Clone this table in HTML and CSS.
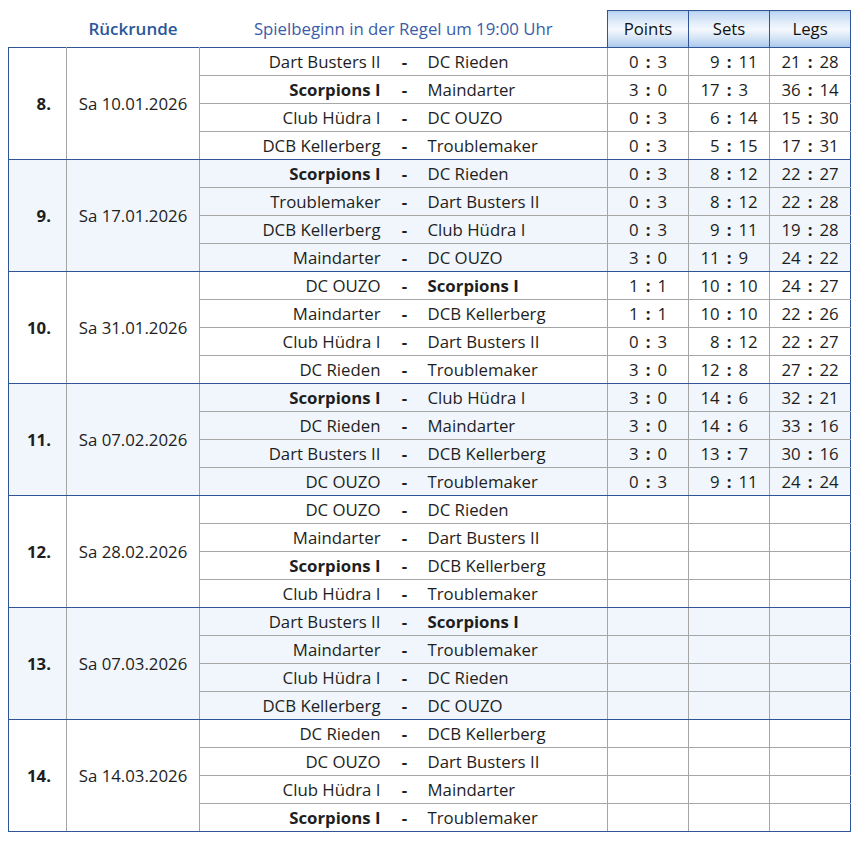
FILE: index.html
```html
<!DOCTYPE html>
<html lang="de">
<head>
<meta charset="utf-8">
<title>Rückrunde</title>
<link rel="stylesheet" href="styles.css">
</head>
<body>
<table class="plan">
  <colgroup>
    <col class="c-round"><col class="c-date"><col class="c-home"><col class="c-dash"><col class="c-away"><col class="c-score"><col class="c-score"><col class="c-score">
  </colgroup>
  <thead>
    <tr>
      <th class="blank"></th>
      <th class="title">Rückrunde</th>
      <th colspan="3" class="info">Spielbeginn in der Regel um 19:00 Uhr</th>
      <th class="sh">Points</th>
      <th class="sh">Sets</th>
      <th class="sh">Legs</th>
    </tr>
  </thead>
  <tbody id="body"></tbody>
</table>
<script src="app.js"></script>
</body>
</html>
```

FILE: styles.css
```css
html, body {
  margin: 0;
  padding: 0;
  background: #ffffff;
}
body {
  padding: 10px 0 0 8px;
  font-family: "Open Sans", "Noto Sans", sans-serif;
  font-size: 16.8px;
  color: #1e1e1e;
}
.plan {
  border-collapse: collapse;
  table-layout: fixed;
  width: 843px;
}
.c-round { width: 58px; }
.c-date { width: 133px; }
.c-home { width: 193px; }
.c-dash { width: 24px; }
.c-away { width: 191px; }
.c-score { width: 81px; }

.plan th {
  height: 36px;
  padding: 0;
  font-weight: normal;
  line-height: 20px;
}
.title {
  color: #2b579a;
  font-weight: 600 !important;
  font-size: 17px;
  text-align: center;
}
.info {
  color: #3b5ca8;
  text-align: center;
}
.sh {
  border: 1px solid #2f5597;
  background: linear-gradient(to bottom, #bdd5f1 0%, #e6f0fb 35%, #f4f8fd 50%, #d3e3f6 75%, #a9c8ec 100%);
  color: #111;
  text-align: center;
}
.plan td {
  height: 27px;
  padding: 0;
  border: 1px solid #a6a6a6;
  white-space: nowrap;
  line-height: 20px;
}
.plan tbody tr.first td {
  border-top: 1px solid #2f5597;
}
.plan tbody tr.last td {
  border-bottom: 1px solid #2f5597;
}
.plan td.round {
  border-left: 1px solid #2f5597;
  text-align: right;
  padding-right: 15px;
  font-weight: 700;
  border-bottom: 1px solid #2f5597;
}
.plan td.date {
  text-align: center;
  border-bottom: 1px solid #2f5597;
}
.plan td.home {
  text-align: right;
  padding-right: 12px;
  border-right: none;
}
.plan td.dash {
  text-align: center;
  font-weight: 700;
  border-left: none;
  border-right: none;
}
.plan td.away {
  text-align: left;
  padding-left: 11px;
  border-left: none;
}
.plan td.legs {
  border-right: 1px solid #2f5597;
}
.alt td {
  background: #f0f6fb;
}
.bold {
  font-weight: 700;
}
.score {
  display: grid;
  grid-template-columns: 1fr auto 1fr;
  column-gap: 7px;
  align-items: center;
}
.score .l { text-align: right; }
.score .c { font-weight: 700; }
.score .r { text-align: left; }
```

FILE: app.js
```js
const rounds = [
  ["8.", "Sa 10.01.2026", [
    ["Dart Busters II", "DC Rieden", "0:3", "9:11", "21:28"],
    ["*Scorpions I", "Maindarter", "3:0", "17:3", "36:14"],
    ["Club Hüdra I", "DC OUZO", "0:3", "6:14", "15:30"],
    ["DCB Kellerberg", "Troublemaker", "0:3", "5:15", "17:31"]]],
  ["9.", "Sa 17.01.2026", [
    ["*Scorpions I", "DC Rieden", "0:3", "8:12", "22:27"],
    ["Troublemaker", "Dart Busters II", "0:3", "8:12", "22:28"],
    ["DCB Kellerberg", "Club Hüdra I", "0:3", "9:11", "19:28"],
    ["Maindarter", "DC OUZO", "3:0", "11:9", "24:22"]]],
  ["10.", "Sa 31.01.2026", [
    ["DC OUZO", "*Scorpions I", "1:1", "10:10", "24:27"],
    ["Maindarter", "DCB Kellerberg", "1:1", "10:10", "22:26"],
    ["Club Hüdra I", "Dart Busters II", "0:3", "8:12", "22:27"],
    ["DC Rieden", "Troublemaker", "3:0", "12:8", "27:22"]]],
  ["11.", "Sa 07.02.2026", [
    ["*Scorpions I", "Club Hüdra I", "3:0", "14:6", "32:21"],
    ["DC Rieden", "Maindarter", "3:0", "14:6", "33:16"],
    ["Dart Busters II", "DCB Kellerberg", "3:0", "13:7", "30:16"],
    ["DC OUZO", "Troublemaker", "0:3", "9:11", "24:24"]]],
  ["12.", "Sa 28.02.2026", [
    ["DC OUZO", "DC Rieden"],
    ["Maindarter", "Dart Busters II"],
    ["*Scorpions I", "DCB Kellerberg"],
    ["Club Hüdra I", "Troublemaker"]]],
  ["13.", "Sa 07.03.2026", [
    ["Dart Busters II", "*Scorpions I"],
    ["Maindarter", "Troublemaker"],
    ["Club Hüdra I", "DC Rieden"],
    ["DCB Kellerberg", "DC OUZO"]]],
  ["14.", "Sa 14.03.2026", [
    ["DC Rieden", "DCB Kellerberg"],
    ["DC OUZO", "Dart Busters II"],
    ["Club Hüdra I", "Maindarter"],
    ["*Scorpions I", "Troublemaker"]]]
];

function team(name) {
  if (name.startsWith("*")) {
    const s = document.createElement("span");
    s.className = "bold";
    s.textContent = name.slice(1);
    return s;
  }
  return document.createTextNode(name);
}

function score(val) {
  const div = document.createElement("div");
  div.className = "score";
  if (!val) return div;
  const [a, b] = val.split(":");
  [[a, "l"], [":", "c"], [b, "r"]].forEach(([t, c]) => {
    const s = document.createElement("span");
    s.className = c;
    s.textContent = t;
    div.appendChild(s);
  });
  return div;
}

const body = document.getElementById("body");
rounds.forEach(([nr, date, matches], gi) => {
  matches.forEach((m, i) => {
    const tr = document.createElement("tr");
    const cls = [];
    if (gi % 2 === 1) cls.push("alt");
    if (i === 0) cls.push("first");
    if (i === matches.length - 1) cls.push("last");
    tr.className = cls.join(" ");
    if (i === 0) {
      const r = document.createElement("td");
      r.className = "round";
      r.rowSpan = matches.length;
      r.textContent = nr;
      const d = document.createElement("td");
      d.className = "date";
      d.rowSpan = matches.length;
      d.textContent = date;
      tr.append(r, d);
    }
    const h = document.createElement("td");
    h.className = "home";
    h.appendChild(team(m[0]));
    const ds = document.createElement("td");
    ds.className = "dash";
    ds.textContent = "-";
    const a = document.createElement("td");
    a.className = "away";
    a.appendChild(team(m[1]));
    tr.append(h, ds, a);
    ["pts", "sets", "legs"].forEach((k, j) => {
      const td = document.createElement("td");
      td.className = k;
      td.appendChild(score(m[2 + j]));
      tr.appendChild(td);
    });
    body.appendChild(tr);
  });
});
```
